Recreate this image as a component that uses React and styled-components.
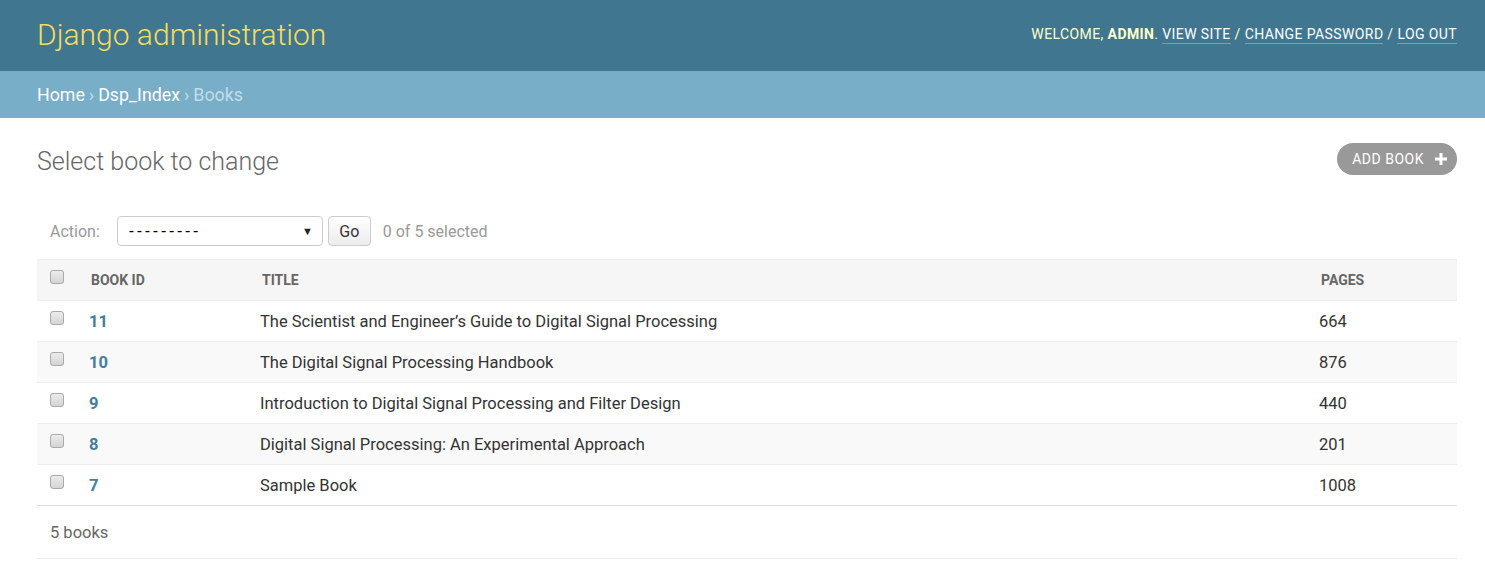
import React from "react";
import styled, { createGlobalStyle } from "styled-components";

const Global = createGlobalStyle`
  html, body { margin: 0; padding: 0; background: #fff; }
  body { font-family: Roboto, "Liberation Sans", sans-serif; color: #333; }
  * { box-sizing: border-box; }
`;

const Header = styled.header`
  height: 71px;
  background: #417690;
  display: flex;
  align-items: center;
  justify-content: space-between;
  padding: 0 28px 0 37px;
`;

const Branding = styled.div`
  font-size: 30px;
  font-weight: 300;
  color: #f5dd5d;
  margin-top: -3px;
`;

const UserTools = styled.div`
  font-size: 14px;
  letter-spacing: 0.4px;
  text-transform: uppercase;
  color: #ffc;
  margin-top: -4px;
  strong { font-weight: 700; color: #ffc; }
`;

const ToolLink = styled.a`
  color: #fff;
  text-decoration: none;
  border-bottom: 1px solid rgba(255, 255, 255, 0.3);
  padding-bottom: 1px;
`;

const Breadcrumbs = styled.nav`
  height: 47px;
  background: #79aec8;
  display: flex;
  align-items: center;
  padding: 0 37px;
  font-size: 17.8px;
  color: #c4dce8;
`;

const Crumb = styled.a`
  color: #fff;
  text-decoration: none;
`;

const Sep = styled.span`
  margin: 0 4px;
  color: #c4dce8;
`;

const Content = styled.main`
  padding: 0 28px 0 37px;
`;

const TitleRow = styled.div`
  display: flex;
  align-items: center;
  justify-content: space-between;
  height: 86px;
`;

const H1 = styled.h1`
  margin: 0;
  font-size: 25px;
  font-weight: 300;
  color: #666;
  margin-top: 1px;
`;

const AddButton = styled.a`
  display: flex;
  align-items: center;
  height: 32px;
  padding: 0 10px 0 15px;
  border-radius: 16px;
  background: #999;
  color: #fff;
  font-size: 14px;
  letter-spacing: 0.5px;
  text-decoration: none;
  gap: 11px;
  margin-top: -4px;
`;

const ActionsBar = styled.div`
  display: flex;
  align-items: center;
  height: 56px;
  padding: 0 0 0 13px;
  margin-top: -1px;
  font-size: 16px;
  color: #999;
`;

const ActionLabel = styled.span`
  margin-right: 17px;
`;

const Select = styled.div`
  width: 206px;
  height: 30px;
  border: 1px solid #ccc;
  border-radius: 4px;
  display: flex;
  align-items: center;
  justify-content: space-between;
  padding: 0 9px 0 11px;
  color: #000;
  font-family: "Liberation Sans", Arial, sans-serif;
  font-size: 16px;
  background: #fff;
`;

const Dashes = styled.span`
  letter-spacing: 2.7px;
`;

const Arrow = styled.span`
  font-size: 11px;
  color: #222;
`;

const GoButton = styled.button`
  margin-left: 5px;
  width: 43px;
  height: 30px;
  border: 1px solid #ccc;
  border-radius: 4px;
  background: linear-gradient(#fff, #ececec);
  font-family: Roboto, sans-serif;
  font-size: 16px;
  color: #333;
  padding: 0;
`;

const Counter = styled.span`
  margin-left: 12px;
  color: #999;
`;

const Table = styled.table`
  width: 100%;
  border-collapse: collapse;
  table-layout: fixed;
`;

const Th = styled.th`
  height: 41px;
  background: #f6f6f6;
  border-top: 1px solid #eee;
  border-bottom: 1px solid #eee;
  text-align: left;
  font-size: 14px;
  font-weight: 700;
  color: #666;
  text-transform: uppercase;
  padding: 0 0 0 ${(p) => p.$pl || 12}px;
  vertical-align: middle;
`;

const Tr = styled.tr`
  background: ${(p) => (p.$alt ? "#f9f9f9" : "#fff")};
  border-bottom: 1px solid ${(p) => (p.$last ? "#ddd" : "#eee")};
`;

const Td = styled.td`
  height: 41px;
  font-size: 16.5px;
  color: #333;
  padding: 0 0 0 ${(p) => p.$pl || 10}px;
  vertical-align: middle;
`;

const IdLink = styled.a`
  color: #447e9b;
  font-weight: 700;
  text-decoration: none;
`;

const Check = styled.span`
  display: block;
  width: 14px;
  height: 14px;
  border: 1px solid #aaa;
  border-radius: 3px;
  background: linear-gradient(#ececec, #d4d4d4);
  margin-top: -6px;
`;

const Paginator = styled.div`
  height: 53px;
  display: flex;
  align-items: center;
  padding-left: 13px;
  border-bottom: 1px solid #eee;
  font-size: 16.5px;
  color: #666;
`;

const Plus = () => (
  <svg width="12" height="12" viewBox="0 0 12 12">
    <path d="M4.5 0h3v4.5H12v3H7.5V12h-3V7.5H0v-3h4.5z" fill="#fff" />
  </svg>
);

const books = [
  { id: 11, title: "The Scientist and Engineer\u2019s Guide to Digital Signal Processing", pages: 664 },
  { id: 10, title: "The Digital Signal Processing Handbook", pages: 876 },
  { id: 9, title: "Introduction to Digital Signal Processing and Filter Design", pages: 440 },
  { id: 8, title: "Digital Signal Processing: An Experimental Approach", pages: 201 },
  { id: 7, title: "Sample Book", pages: 1008 },
];

export default function App() {
  return (
    <>
      <Global />
      <Header>
        <Branding>Django administration</Branding>
        <UserTools>
          Welcome, <strong>admin</strong>. <ToolLink href="#">View site</ToolLink> /{" "}
          <ToolLink href="#">Change password</ToolLink> / <ToolLink href="#">Log out</ToolLink>
        </UserTools>
      </Header>
      <Breadcrumbs>
        <Crumb href="#">Home</Crumb>
        <Sep>›</Sep>
        <Crumb href="#">Dsp_Index</Crumb>
        <Sep>›</Sep>
        <span>Books</span>
      </Breadcrumbs>
      <Content>
        <TitleRow>
          <H1>Select book to change</H1>
          <AddButton href="#">
            ADD BOOK <Plus />
          </AddButton>
        </TitleRow>
        <ActionsBar>
          <ActionLabel>Action:</ActionLabel>
          <Select>
            <Dashes>---------</Dashes>
            <Arrow>▼</Arrow>
          </Select>
          <GoButton>Go</GoButton>
          <Counter>0 of 5 selected</Counter>
        </ActionsBar>
        <Table>
          <colgroup>
            <col style={{ width: 41 }} />
            <col style={{ width: 171 }} />
            <col />
            <col style={{ width: 149 }} />
          </colgroup>
          <thead>
            <tr>
              <Th $pl={13}><Check /></Th>
              <Th $pl={13}>Book ID</Th>
              <Th $pl={13}>Title</Th>
              <Th $pl={13}>Pages</Th>
            </tr>
          </thead>
          <tbody>
            {books.map((b, i) => (
              <Tr key={b.id} $alt={i % 2 === 1} $last={i === books.length - 1}>
                <Td $pl={13}><Check /></Td>
                <Td $pl={11}><IdLink href="#">{b.id}</IdLink></Td>
                <Td $pl={11}>{b.title}</Td>
                <Td $pl={11}>{b.pages}</Td>
              </Tr>
            ))}
          </tbody>
        </Table>
        <Paginator>5 books</Paginator>
      </Content>
    </>
  );
}
